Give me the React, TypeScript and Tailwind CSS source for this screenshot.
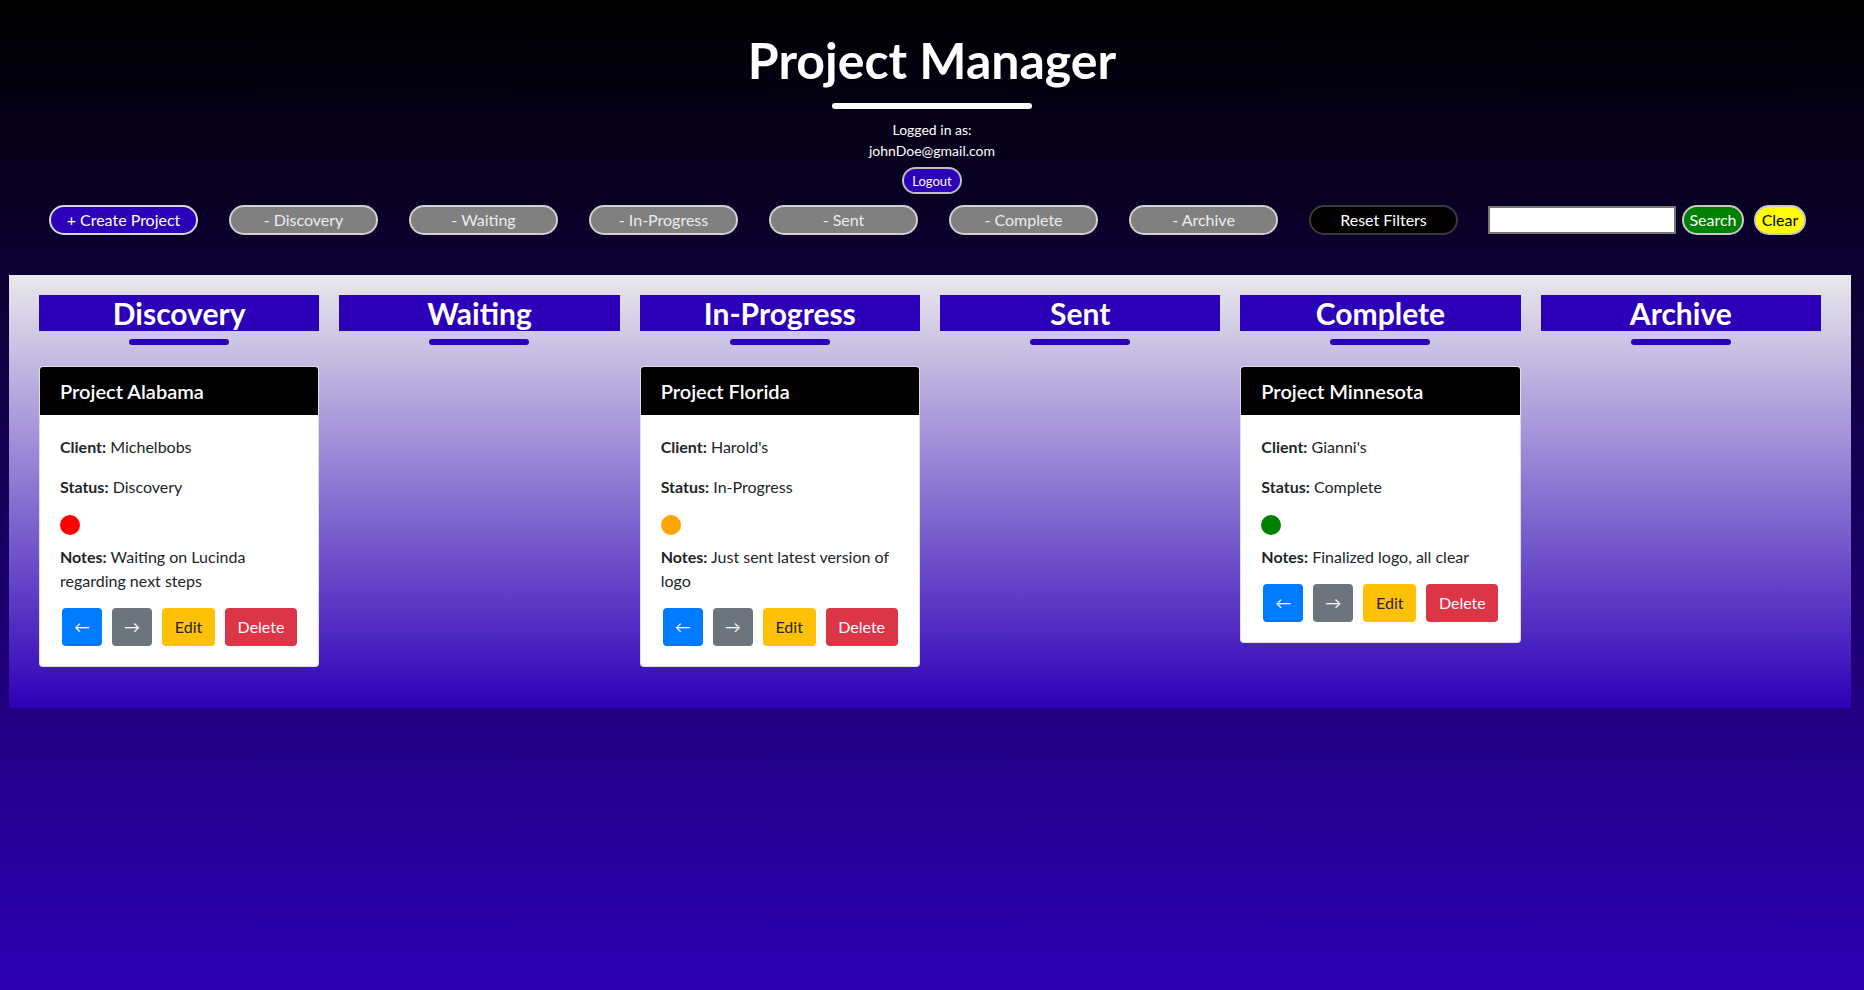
import React from "react";

type Project = {
  name: string;
  client: string;
  status: string;
  dot: string;
  notes: string;
};

const columns: { title: string; project?: Project }[] = [
  {
    title: "Discovery",
    project: {
      name: "Project Alabama",
      client: "Michelbobs",
      status: "Discovery",
      dot: "bg-[#ff0000]",
      notes: "Waiting on Lucinda regarding next steps",
    },
  },
  { title: "Waiting" },
  {
    title: "In-Progress",
    project: {
      name: "Project Florida",
      client: "Harold's",
      status: "In-Progress",
      dot: "bg-[#ffa500]",
      notes: "Just sent latest version of logo",
    },
  },
  { title: "Sent" },
  {
    title: "Complete",
    project: {
      name: "Project Minnesota",
      client: "Gianni's",
      status: "Complete",
      dot: "bg-[#008000]",
      notes: "Finalized logo, all clear",
    },
  },
  { title: "Archive" },
];

const filters = ["Discovery", "Waiting", "In-Progress", "Sent", "Complete", "Archive"];

function Card({ p }: { p: Project }) {
  return (
    <div className="mt-[21px] w-full overflow-hidden rounded-[4px] border border-[rgba(0,0,0,0.125)] bg-white text-[#212529]">
      <div className="bg-black px-[20px] pt-[12px] pb-[12px] text-[20px] font-semibold leading-[24px] text-white">
        {p.name}
      </div>
      <div className="px-[20px] pt-[20px] pb-[20px] text-[16px] leading-[24px]">
        <p className="mb-[16px]">
          <span className="font-bold">Client:</span> {p.client}
        </p>
        <p className="mb-[16px]">
          <span className="font-bold">Status:</span> {p.status}
        </p>
        <div className={`mb-[10px] h-[20px] w-[20px] rounded-full ${p.dot}`} />
        <p className="mb-[15px]">
          <span className="font-bold">Notes:</span> {p.notes}
        </p>
        <div className="ml-[2px] flex gap-[10px]">
          <button className="h-[38px] w-[40px] rounded-[4px] bg-[#007bff] text-[16px] text-white">←</button>
          <button className="h-[38px] w-[40px] rounded-[4px] bg-[#6c757d] text-[16px] text-white">→</button>
          <button className="h-[38px] w-[53px] rounded-[4px] bg-[#ffc107] text-[16px] text-[#212529]">Edit</button>
          <button className="h-[38px] w-[72px] rounded-[4px] bg-[#dc3545] text-[16px] text-white">Delete</button>
        </div>
      </div>
    </div>
  );
}

export default function App() {
  return (
    <div
      className="h-[990px] w-full bg-[linear-gradient(to_bottom,#000000,#2c00b4)] text-white"
      style={{ fontFamily: "Lato, 'DejaVu Sans', sans-serif" }}
    >
      <div className="flex flex-col items-center pt-[30px]">
        <h1 className="text-[50px] font-bold leading-[60px] text-white">Project Manager</h1>
        <div className="mt-[13px] h-[6px] w-[200px] rounded-full bg-white" />
        <p className="mt-[10px] text-[14px] leading-[21px]">Logged in as:</p>
        <p className="text-[14px] leading-[21px]">johnDoe@gmail.com</p>
        <button className="mt-[6px] h-[27px] rounded-full border-2 border-[#c0c0c0] bg-[#2c00b8] px-[8px] text-[13px] leading-[20px] text-white">
          Logout
        </button>
      </div>

      <div className="mt-[11px] flex items-center pl-[49px]">
        <button className="h-[30px] w-[149px] rounded-full border-2 border-[#d8d8d8] bg-[#2c00b8] text-[16px] text-white">
          + Create Project
        </button>
        {filters.map((f) => (
          <button
            key={f}
            className="ml-[31px] h-[30px] w-[149px] rounded-full border-2 border-[#d0d0d0] bg-[#808080] text-[16px] text-[#ececec]"
          >
            - {f}
          </button>
        ))}
        <button className="ml-[31px] h-[30px] w-[149px] rounded-full border-2 border-[#3a3a3a] bg-black text-[16px] text-white">
          Reset Filters
        </button>
        <input className="ml-[30px] h-[28px] w-[188px] border-2 border-[#767676] bg-white text-black outline-none" />
        <button className="ml-[6px] h-[30px] w-[62px] rounded-full border-2 border-[#c8c8c8] bg-[#008000] text-[16px] text-white">
          Search
        </button>
        <button className="ml-[10px] h-[30px] w-[52px] rounded-full border-2 border-[#c8c8c8] bg-[#ffff00] text-[16px] text-black">
          Clear
        </button>
      </div>

      <div className="ml-[9px] mt-[40px] grid w-[1842px] grid-cols-6 items-start gap-x-[20px] bg-[linear-gradient(to_bottom,#e9e8ec,#2e00b8)] px-[30px] pt-[20px] pb-[41px]">
        {columns.map((c) => (
          <div key={c.title} className="flex flex-col items-center">
            <div className="h-[36px] w-full bg-[#2c00b8] text-center text-[30px] font-bold leading-[36px] text-white">
              {c.title}
            </div>
            <div className="mt-[8px] h-[6px] w-[100px] rounded-full bg-[#2c00b8]" />
            {c.project && <Card p={c.project} />}
          </div>
        ))}
      </div>
    </div>
  );
}
